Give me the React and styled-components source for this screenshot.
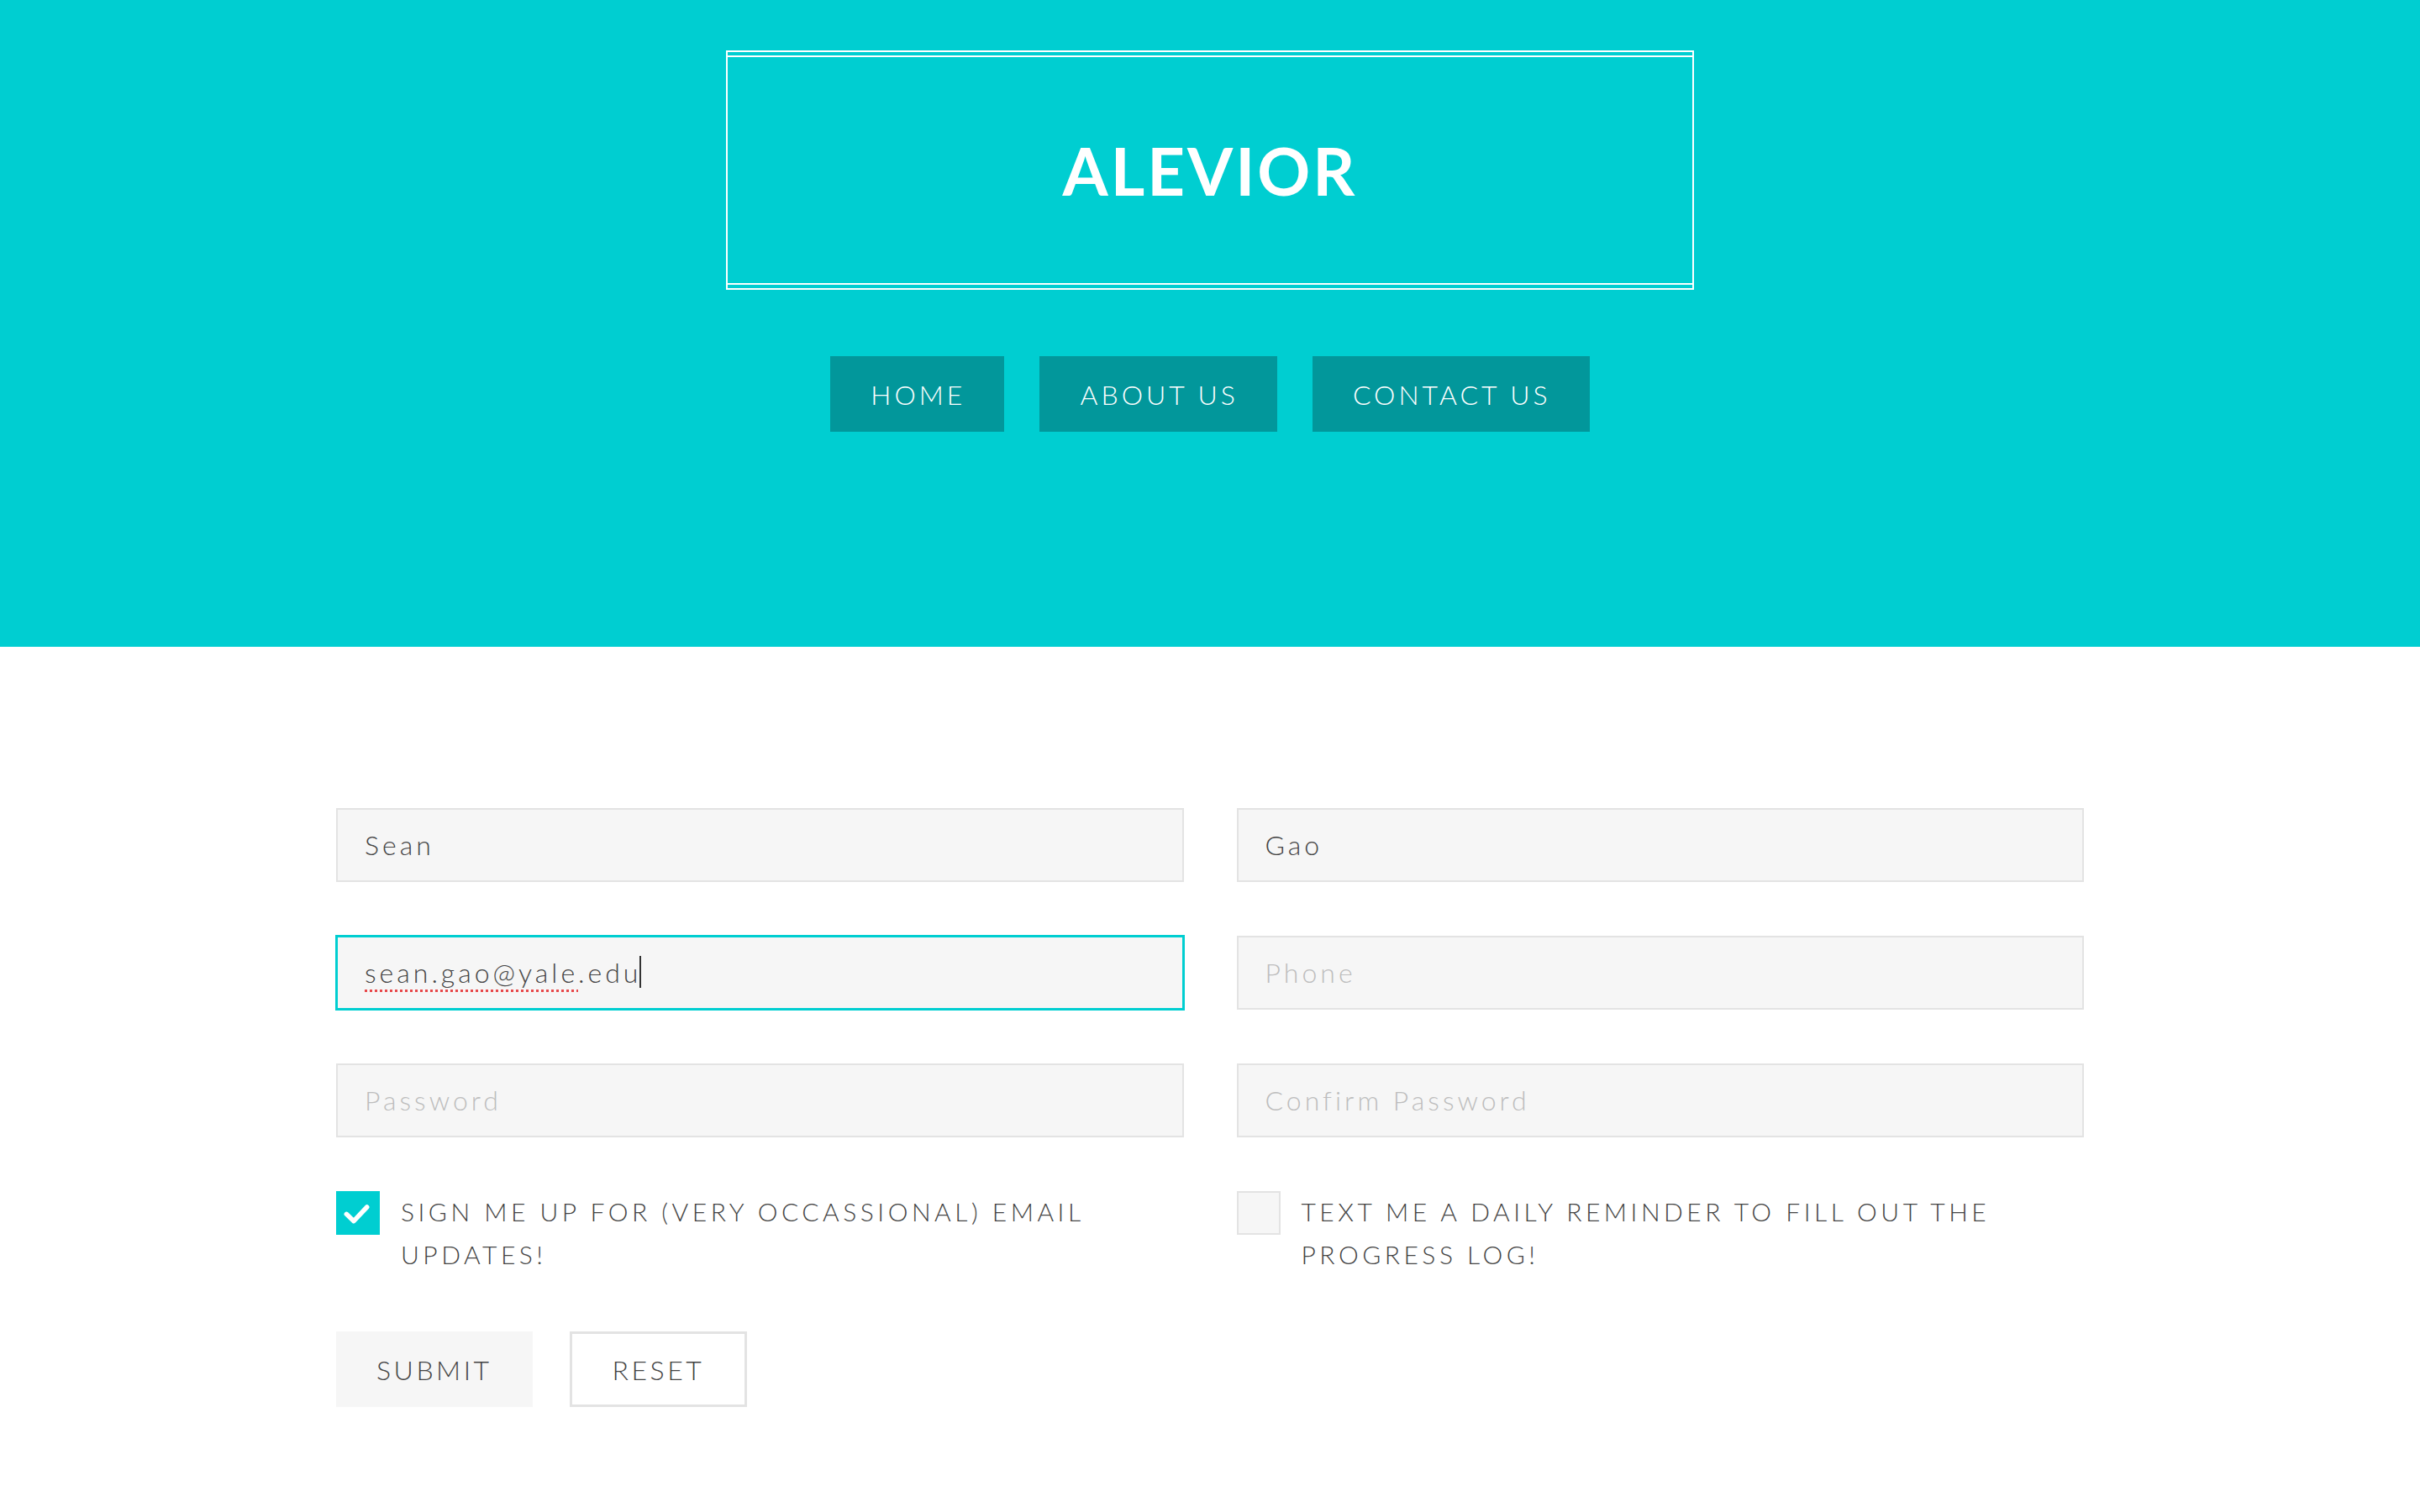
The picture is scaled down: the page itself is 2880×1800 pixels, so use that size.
import React from 'react';
import styled, { createGlobalStyle, css } from 'styled-components';

const cyan = '#00ced1';

const GlobalStyle = createGlobalStyle`
  body {
    margin: 0;
    background: #fff;
    font-family: 'Lato', 'Open Sans', sans-serif;
  }
`;

const Header = styled.header`
  background: ${cyan};
  padding: 60px 0 256px;
  display: flex;
  flex-direction: column;
  align-items: center;
`;

const TitleBox = styled.div`
  width: 1152px;
  height: 285px;
  box-sizing: border-box;
  border: 2px solid #fff;
  padding: 4px 0;
`;

const TitleInner = styled.div`
  height: 100%;
  box-sizing: border-box;
  border-top: 2px solid #fff;
  border-bottom: 2px solid #fff;
  display: flex;
  align-items: center;
  justify-content: center;
`;

const Title = styled.h1`
  margin: 0;
  color: #fff;
  font-family: 'Lato', sans-serif;
  font-weight: 700;
  font-size: 78px;
  letter-spacing: 3px;
  line-height: 1;
`;

const Nav = styled.nav`
  margin-top: 79px;
  display: flex;
  gap: 42px;
`;

const NavLink = styled.a`
  height: 90px;
  padding: 0 46px 0 48px;
  display: flex;
  align-items: center;
  background: #02979b;
  color: #fff;
  text-decoration: none;
  font-size: 32px;
  font-weight: 300;
  letter-spacing: 4px;
`;

const Form = styled.form`
  width: 2080px;
  margin: 192px auto 0;
  display: grid;
  grid-template-columns: 1fr 1fr;
  column-gap: 63px;
  row-gap: 64px;
`;

const fieldBase = css`
  height: 88px;
  width: 100%;
  box-sizing: border-box;
  border: 2px solid #e3e3e3;
  background: #f6f6f6;
  padding: 0 32px 2px;
  font-family: 'Lato', sans-serif;
  font-size: 32px;
  font-weight: 300;
  letter-spacing: 4px;
  color: #444;
  outline: none;
`;

const Field = styled.input`
  ${fieldBase}
  &::placeholder {
    color: #bdbdbd;
  }
`;

const ActiveField = styled.div`
  ${fieldBase}
  display: flex;
  align-items: center;
  border-color: ${cyan};
  box-shadow: 0 0 0 1px ${cyan};
`;

const Misspelt = styled.span`
  text-decoration: underline dotted #e8484a;
  text-decoration-thickness: 3px;
  text-underline-offset: 8px;
`;

const Caret = styled.span`
  display: inline-block;
  width: 2px;
  height: 38px;
  margin-left: -2px;
  background: #333;
`;

const CheckRow = styled.label`
  display: flex;
  align-items: flex-start;
  gap: 25px;
`;

const Box = styled.span`
  flex: none;
  width: 52px;
  height: 52px;
  box-sizing: border-box;
  background: ${({ $checked }) => ($checked ? cyan : '#f6f6f6')};
  border: 2px solid ${({ $checked }) => ($checked ? cyan : '#e3e3e3')};
  display: flex;
  align-items: center;
  justify-content: center;
`;

const CheckText = styled.span`
  font-size: 30px;
  font-weight: 300;
  line-height: 51px;
  letter-spacing: 4.5px;
  color: #444;
  margin-top: -1px;
`;

const Actions = styled.div`
  display: flex;
  gap: 44px;
  margin-top: 2px;
`;

const Button = styled.button`
  height: 90px;
  padding: 0 ${({ $outline }) => ($outline ? '48px' : '45px')};
  box-sizing: border-box;
  background: ${({ $outline }) => ($outline ? '#fff' : '#f6f6f6')};
  border: 3px solid ${({ $outline }) => ($outline ? '#e3e3e3' : '#f6f6f6')};
  font-family: 'Lato', sans-serif;
  font-size: 32px;
  font-weight: 300;
  letter-spacing: 3.5px;
  color: #444;
  cursor: pointer;
`;

const Check = () => (
  <svg width="48" height="48" viewBox="0 0 48 48">
    <polyline
      points="10.3,25.3 19,33.7 34.7,17"
      fill="none"
      stroke="#fff"
      strokeWidth="5.5"
      strokeLinecap="round"
      strokeLinejoin="round"
    />
  </svg>
);

const App = () => (
  <>
    <GlobalStyle />
    <Header>
      <TitleBox>
        <TitleInner>
          <Title>ALEVIOR</Title>
        </TitleInner>
      </TitleBox>
      <Nav>
        <NavLink href="#">HOME</NavLink>
        <NavLink href="#">ABOUT US</NavLink>
        <NavLink href="#">CONTACT US</NavLink>
      </Nav>
    </Header>
    <Form onSubmit={(e) => e.preventDefault()}>
      <Field defaultValue="Sean" />
      <Field defaultValue="Gao" />
      <ActiveField>
        <Misspelt>sean.gao@yale</Misspelt>.edu
        <Caret />
      </ActiveField>
      <Field placeholder="Phone" />
      <Field type="password" placeholder="Password" />
      <Field type="password" placeholder="Confirm Password" />
      <CheckRow>
        <Box $checked>
          <Check />
        </Box>
        <CheckText>SIGN ME UP FOR (VERY OCCASSIONAL) EMAIL UPDATES!</CheckText>
      </CheckRow>
      <CheckRow>
        <Box />
        <CheckText>TEXT ME A DAILY REMINDER TO FILL OUT THE PROGRESS LOG!</CheckText>
      </CheckRow>
      <Actions>
        <Button type="submit">SUBMIT</Button>
        <Button type="reset" $outline>
          RESET
        </Button>
      </Actions>
    </Form>
  </>
);

export default App;
